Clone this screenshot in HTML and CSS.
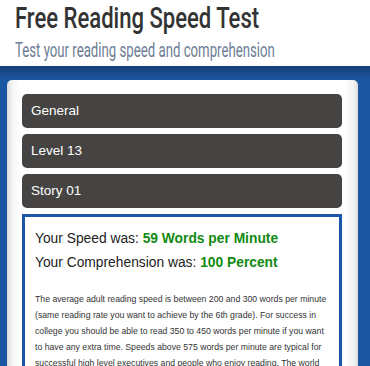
FILE: index.html
```html
<!DOCTYPE html>
<html lang="en">
<head>
    <meta charset="UTF-8">
    <meta name="viewport" content="width=device-width, initial-scale=1.0">
    <title>Free Reading Speed Test</title>
    <link rel="stylesheet" href="styles.css">
</head>
<body>
    <header class="header">
        <h1>Free Reading Speed Test</h1>
        <p>Test your reading speed and comprehension</p>
    </header>
    <main class="band">
        <div class="panel">
            <div class="bar">General</div>
            <div class="bar">Level 13</div>
            <div class="bar">Story 01</div>
            <div class="result">
                <p class="score">Your Speed was: <b>59 Words per Minute</b></p>
                <p class="score">Your Comprehension was: <b>100 Percent</b></p>
                <p class="text">The average adult reading speed is between 200 and 300 words per minute (same reading rate you want to achieve by the 6th grade). For success in college you should be able to read 350 to 450 words per minute if you want to have any extra time. Speeds above 575 words per minute are typical for successful high level executives and people who enjoy reading. The world record for reading speed is over 4,000 words per minute.</p>
            </div>
        </div>
    </main>
</body>
</html>
```

FILE: styles.css
```css
body {
    margin: 0;
    background-color: white;
    overflow: hidden;
}
.header {
    padding: 0 15px;
    height: 66px;
    box-sizing: border-box;
    white-space: nowrap;
}
.header h1 {
    margin: 0;
    font-family: "Roboto", sans-serif;
    font-weight: 500;
    font-size: 30px;
    line-height: 36px;
    color: #333;
    transform: scaleX(0.735);
    transform-origin: left center;
}
.header p {
    margin: 2px 0 0 0;
    font-family: "Roboto", sans-serif;
    font-size: 20px;
    line-height: 24px;
    color: #6c7d95;
    transform: scaleX(0.66);
    transform-origin: left center;
}
.band {
    background: linear-gradient(to bottom, #153f78 0px, #1b56a0 14px, #1b56a0 100%);
    padding: 14px 12px 0 7px;
    height: 300px;
}
.panel {
    background: linear-gradient(to right, #dcdcdc 0px, #f6f6f6 6px, #fff 14px, #fff calc(100% - 14px), #f0f0f0 calc(100% - 4px), #dcdcdc 100%);
    border-radius: 5px 5px 0 0;
    padding: 14px 16px 0 15px;
    display: flex;
    flex-direction: column;
    gap: 6px;
    height: 100%;
}
.bar {
    background-color: #454443;
    color: white;
    border-radius: 5px;
    height: 34px;
    line-height: 34px;
    padding-left: 9px;
    font-family: "Liberation Sans", Arial, sans-serif;
    font-size: 13.5px;
}
.result {
    border: 3px solid #1c56a6;
    background-color: white;
    padding: 10px 6px 0 10px;
    font-family: "Liberation Sans", Arial, sans-serif;
}
.score {
    margin: 0;
    font-size: 13.8px;
    line-height: 24px;
    color: #222;
    white-space: nowrap;
}
.score b {
    color: #118a11;
}
.text {
    margin: 16px 0 0 0;
    font-size: 8.7px;
    line-height: 16px;
    color: #333;
}
```
